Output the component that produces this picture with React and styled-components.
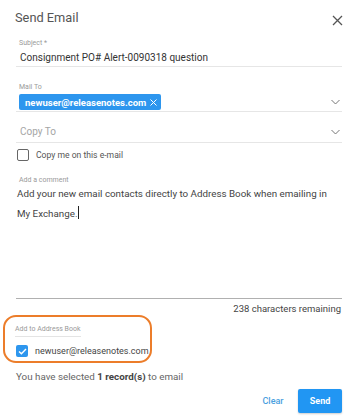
import React from "react";
import styled, { createGlobalStyle } from "styled-components";

const Global = createGlobalStyle`
  html, body { margin: 0; padding: 0; background: #fff; }
  body { font-family: Roboto, "Liberation Sans", Arial, sans-serif; color: #333; }
`;

const Dialog = styled.div`
  width: 347px;
  height: 416px;
  box-sizing: border-box;
  padding: 0 5px 0 16px;
  display: flex;
  flex-direction: column;
  overflow: hidden;
`;

const Header = styled.div`
  height: 36px;
  display: flex;
  align-items: flex-start;
  justify-content: space-between;
`;

const Title = styled.h1`
  margin: 9px 0 0 -1px;
  font-size: 12.8px;
  line-height: 18px;
  font-weight: 400;
  color: #555;
`;

const Close = styled.button`
  margin-top: 15px;
  margin-right: -1px;
  padding: 0;
  border: 0;
  background: none;
  width: 11px;
  height: 11px;
  display: flex;
  color: #555;
`;

const Field = styled.div`
  display: flex;
  flex-direction: column;
  border-bottom: 1px solid #e6e6e6;
  margin-top: ${(p) => p.$mt || 0}px;
  padding-bottom: ${(p) => p.$pb || 0}px;
`;

const Label = styled.div`
  font-size: 7px;
  line-height: 9px;
  color: #9a9a9a;
  padding-left: 3px;
`;

const Value = styled.div`
  font-size: 10px;
  line-height: 14px;
  color: ${(p) => (p.$placeholder ? "#a5a5a5" : "#333")};
  padding-left: 4px;
  margin-top: ${(p) => p.$mt || 0}px;
`;

const SelectRow = styled.div`
  display: flex;
  align-items: center;
  justify-content: space-between;
  margin-top: ${(p) => p.$mt || 0}px;
`;

const Chip = styled.span`
  display: inline-flex;
  align-items: center;
  gap: 4px;
  height: 16px;
  margin-left: 3px;
  padding: 0 4px 0 6px;
  background: #2d96ee;
  border-radius: 2px;
  color: #fff;
  font-size: 9.5px;
  font-weight: 700;
`;

const Chevron = styled.svg`
  width: 9px;
  height: 6px;
  margin-right: 2px;
  flex: none;
`;

const CheckRow = styled.label`
  display: flex;
  align-items: center;
  gap: 7px;
  margin-top: ${(p) => p.$mt || 0}px;
  font-size: 8.6px;
  color: #555;
`;

const Box = styled.span`
  width: 12px;
  height: 12px;
  box-sizing: border-box;
  border-radius: 2px;
  border: ${(p) => (p.$checked ? "none" : "1.5px solid #666")};
  background: ${(p) => (p.$checked ? "#2d96ee" : "#fff")};
  display: flex;
  align-items: center;
  justify-content: center;
  margin-left: ${(p) => p.$ml || 0}px;
`;

const Comment = styled.div`
  display: flex;
  flex-direction: column;
  margin-top: 15px;
  height: 122px;
  border-bottom: 1.5px solid #b0b0b0;
`;

const CommentText = styled.div`
  margin-top: -1px;
  font-size: 9.8px;
  line-height: 20px;
  color: #444;
  padding: 0 12px 0 1px;
`;

const Caret = styled.span`
  display: inline-block;
  width: 1px;
  height: 13px;
  background: #222;
  vertical-align: -2px;
`;

const Remaining = styled.div`
  text-align: right;
  font-size: 9.5px;
  line-height: 12px;
  margin-top: 4px;
  padding-right: 1px;
  color: #444;
`;

const Highlight = styled.div`
  align-self: flex-start;
  margin: 0 0 0 -13px;
  width: 149px;
  height: 48px;
  box-sizing: border-box;
  border: 2px solid #ec7d2a;
  border-radius: 13px;
  padding: 8px 0 0 10px;
  display: flex;
  flex-direction: column;
`;

const SectionLabel = styled.div`
  align-self: flex-start;
  font-size: 7px;
  line-height: 9px;
  color: #9a9a9a;
  padding-bottom: 2px;
  border-bottom: 1px solid #e4e4e4;
`;

const Email = styled.span`
  font-size: 9px;
  color: #444;
`;

const Summary = styled.div`
  margin-top: 8px;
  font-size: 9.8px;
  line-height: 12px;
  color: #666;
  b { color: #444; }
`;

const Actions = styled.div`
  display: flex;
  justify-content: flex-end;
  align-items: center;
  gap: 13px;
  margin-top: 6px;
`;

const Button = styled.button`
  border: 0;
  border-radius: 2px;
  font-family: inherit;
  font-size: 9px;
  font-weight: ${(p) => (p.$primary ? 700 : 500)};
  height: 24px;
  padding: 0;
  width: ${(p) => (p.$primary ? 44 : 24)}px;
  background: ${(p) => (p.$primary ? "#2196f3" : "transparent")};
  color: ${(p) => (p.$primary ? "#fff" : "#4aa0e0")};
  box-shadow: ${(p) => (p.$primary ? "0 1px 2px rgba(0,0,0,.2)" : "none")};
`;

const ChevronIcon = () => (
  <Chevron viewBox="0 0 9 6">
    <path d="M0.5 1 L4.5 5 L8.5 1" fill="none" stroke="#777" strokeWidth="1" />
  </Chevron>
);

export default function App() {
  return (
    <>
      <Global />
      <Dialog>
        <Header>
          <Title>Send Email</Title>
          <Close aria-label="close">
            <svg width="11" height="11" viewBox="0 0 11 11">
              <path d="M1 1 L10 10 M10 1 L1 10" stroke="#555" strokeWidth="1.3" />
            </svg>
          </Close>
        </Header>

        <Field $mt={3} $pb={1}>
          <Label>Subject *</Label>
          <Value $mt={3}>Consignment PO# Alert-0090318 question</Value>
        </Field>

        <Field $mt={16} $pb={1}>
          <Label>Mail To</Label>
          <SelectRow $mt={2}>
            <Chip>
              newuser@releasenotes.com
              <svg width="7" height="7" viewBox="0 0 7 7">
                <path d="M0.5 0.5 L6.5 6.5 M6.5 0.5 L0.5 6.5" stroke="#fff" strokeWidth="1" />
              </svg>
            </Chip>
            <ChevronIcon />
          </SelectRow>
        </Field>

        <Field $pb={3}>
          <SelectRow $mt={13}>
            <Value $placeholder>Copy To</Value>
            <ChevronIcon />
          </SelectRow>
        </Field>

        <CheckRow $mt={6}>
          <Box $ml={1} />
          Copy me on this e-mail
        </CheckRow>

        <Comment>
          <Label>Add a comment</Label>
          <CommentText>
            Add your new email contacts directly to Address Book when emailing in My Exchange.
            <Caret />
          </CommentText>
        </Comment>

        <Remaining>238 characters remaining</Remaining>

        <Highlight>
          <SectionLabel>Add to Address Book</SectionLabel>
          <CheckRow $mt={8}>
            <Box $checked $ml={1}>
              <svg width="9" height="7" viewBox="0 0 9 7">
                <path d="M1 3.5 L3.4 5.8 L8 1" fill="none" stroke="#fff" strokeWidth="1.4" />
              </svg>
            </Box>
            <Email>newuser@releasenotes.com</Email>
          </CheckRow>
        </Highlight>

        <Summary>
          You have selected <b>1 record(s)</b> to email
        </Summary>

        <Actions>
          <Button>Clear</Button>
          <Button $primary>Send</Button>
        </Actions>
      </Dialog>
    </>
  );
}
